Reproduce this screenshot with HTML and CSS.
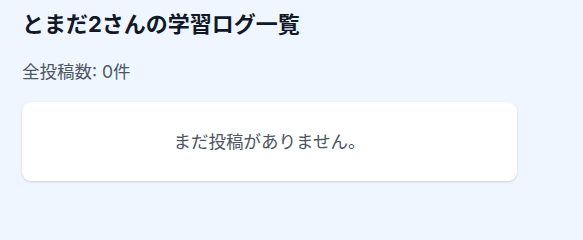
FILE: index.html
```html
<!DOCTYPE html>
<html lang="ja">
<head>
<meta charset="utf-8">
<link rel="stylesheet" href="styles.css">
</head>
<body>
<main class="page">
  <h1 class="title">とまだ2さんの学習ログ一覧</h1>
  <p class="count">全投稿数: 0件</p>
  <section class="card">
    <p class="empty">まだ投稿がありません。</p>
  </section>
</main>
</body>
</html>
```
FILE: styles.css
```css
html, body {
  margin: 0;
  padding: 0;
  background: #eff6ff;
  font-family: "Inter", "Noto Sans CJK JP", sans-serif;
}
.page {
  padding: 9px 22px 20px;
  max-width: 495px;
}
.title {
  margin: 0;
  font-size: 22px;
  line-height: 30px;
  font-weight: 700;
  color: #111827;
}
.count {
  margin: 20px 0 0;
  font-size: 17.5px;
  line-height: 26px;
  color: #4b5563;
}
.card {
  margin-top: 17px;
  background: #ffffff;
  border-radius: 9px;
  box-shadow: 0 1px 3px rgba(0, 0, 0, 0.1), 0 1px 2px rgba(0, 0, 0, 0.06);
  height: 79px;
  display: flex;
  align-items: center;
  justify-content: center;
}
.empty {
  margin: 0;
  font-size: 17.5px;
  line-height: 26px;
  color: #4b5563;
}
```
